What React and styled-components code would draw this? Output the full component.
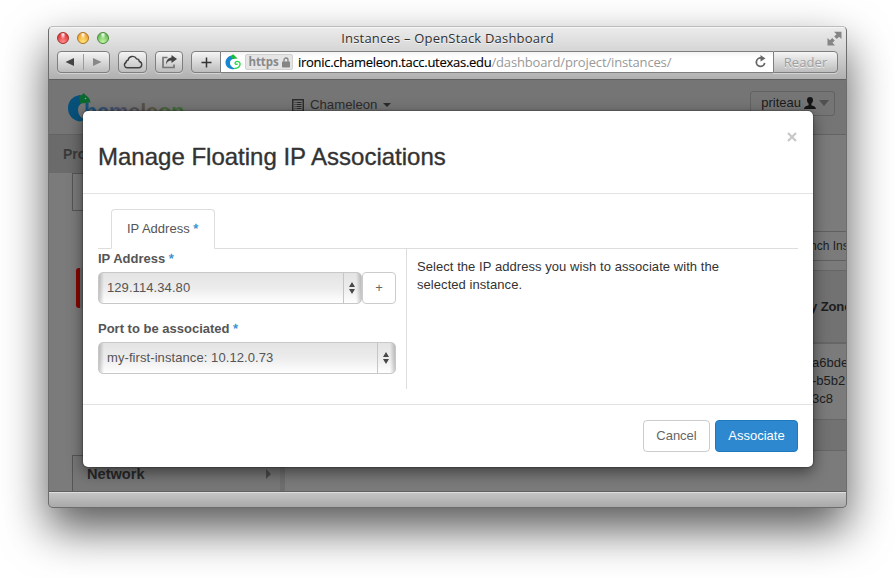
import React from 'react';
import styled, { createGlobalStyle } from 'styled-components';

const Global = createGlobalStyle`
  * { box-sizing: border-box; }
  html, body { margin: 0; background: #fff; overflow: hidden; }
  body { font: 13px/18px "Liberation Sans", Arial, sans-serif; color: #555; }
  button { font: inherit; padding: 0; margin: 0; }
`;

const Desktop = styled.div`
  width: 895px; height: 578px; padding: 26px 48px 0; overflow: hidden; background: #fff;
`;
const Window = styled.main`
  width: 799px; height: 482px; border-radius: 5px; overflow: hidden;
  border: 1px solid #6d6d6d; border-top-color: #bcbcbc;
  display: flex; flex-direction: column; background: #7b7b7b;
  box-shadow: 0 21px 45px rgba(0,0,0,.66);
`;
const Chrome = styled.header`
  height: 53px; flex: none; border-bottom: 1px solid #606060;
  background: linear-gradient(#ececec, #d6d6d6 45%, #b0b0b0);
  box-shadow: inset 0 1px 0 #f6f6f6;
`;
const TitleBar = styled.div`
  height: 24px; display: flex; align-items: center; padding: 0 4px 2px 8px;
`;
const Lights = styled.div`display: flex; gap: 8px; width: 76px;`;
const Light = styled.span`
  width: 12px; height: 12px; border-radius: 50%; border: 1px solid ${p => p.$edge};
  background: radial-gradient(ellipse at 50% 15%, #fff 0, transparent 40%),
    radial-gradient(circle at 50% 90%, ${p => p.$glow}, ${p => p.$tone} 75%);
`;
const WindowTitle = styled.h1`
  flex: 1; margin: 0; text-align: center; font: 13px/20px "Open Sans", "Noto Sans", sans-serif;
  color: #303030; letter-spacing: .2px; text-shadow: 0 1px 0 #f4f4f4;
`;
const TitleEnd = styled.div`width: 80px; display: flex; justify-content: flex-end;`;
const Tools = styled.div`
  display: flex; padding: 0 8px; height: 22px;
`;
const ToolButton = styled.button`
  width: ${p => p.$w}px; height: 22px; margin-right: ${p => p.$gap ?? 8}px;
  border: 1px solid #7f7f7f; border-radius: ${p => p.$r || '4px'};
  background: linear-gradient(#f5f5f5, #bdbdbd); color: #3d3d3d;
  box-shadow: 0 1px 0 rgba(255,255,255,.4);
  display: flex; align-items: center; justify-content: center;
`;
const Split = styled.span`width: 1px; height: 16px; background: #9b9b9b; margin: 0 8px;`;
const Address = styled.div`
  width: 552px; height: 22px; background: linear-gradient(#f3f3f3, #fff 25%);
  border: solid #7f7f7f; border-width: 1px 0; display: flex; align-items: center; padding-left: 4px;
`;
const Secure = styled.span`
  width: 48px; height: 16px; margin: 0 5px 0 4px; border: 1px solid #d0d0d0; border-radius: 2px; background: #e5e5e5;
  display: flex; align-items: center; justify-content: center; gap: 3px;
  font: 700 11.5px/14px "Open Sans", sans-serif; letter-spacing: -.1px; color: #898989;
`;
const Url = styled.span`
  flex: 1; font: 13px/20px "Open Sans", sans-serif; color: #000; white-space: nowrap; letter-spacing: -0.28px;
  -webkit-text-stroke: .15px #000;
`;
const UrlPath = styled.span`color: #999; letter-spacing: -0.15px; -webkit-text-stroke: 0;`;
const Reload = styled.span`width: 13px; height: 14px; margin-right: 6px; display: flex;`;
const Reader = styled(ToolButton)`
  font: 13px/20px "Open Sans", sans-serif; color: #a0a0a0; letter-spacing: .1px; text-shadow: 0 1px 0 #eee;
`;

const Page = styled.div`
  position: relative; flex: 1; overflow: hidden; display: flex; flex-direction: column; background: #7b7b7b;
`;
const PageHeader = styled.div`
  height: 55px; flex: none; background: #757575; border-bottom: 1px solid #636363;
  display: flex; padding: 11px 11px 0 18px;
`;
const Brand = styled.div`display: flex; width: 225px; padding-top: 2px;`;
const Wordmark = styled.span`
  margin: 4px 0 0 -10px; font: 700 22px/30px "Liberation Sans", sans-serif; letter-spacing: -.3px;
  color: transparent; background: linear-gradient(90deg, #12527c, #4b4e68 35%, #5b5146 65%, #3f6c37 90%);
  background-clip: text; -webkit-background-clip: text;
`;
const Project = styled.div`
  display: flex; align-items: center; gap: 6px; height: 28px; flex: 1; color: #2b2b2b; font-size: 13.2px;
`;
const UserMenu = styled.div`
  width: 85px; height: 25px; border: 1px solid #626262; border-radius: 3px; color: #1b1b1b;
  display: flex; align-items: center; justify-content: flex-end; gap: 3px; padding: 0 5px 2px 0; font-size: 13px;
`;
const Workspace = styled.div`display: flex; flex: 1;`;
const Sidebar = styled.nav`width: 236px; flex: none; border-right: 5px solid #6f6f6f; display: flex; flex-direction: column;`;
const Section = styled.div`
  height: 38px; padding: 10px 14px; background: #6b6b6b; color: #3a3a3a; font: 700 14px/18px "Liberation Sans", sans-serif;
`;
const Panel = styled.div`
  margin-left: 23px; height: 38px; border: 1px solid #565656; border-right: 0;
`;
const Active = styled.div`
  margin: 57px 0 147px 27px; height: 40px; border-left: 4px solid #850600; border-radius: 3px; background: #717171;
`;
const Network = styled(Panel)`
  display: flex; justify-content: space-between; align-items: center; padding: 0 8px 0 14px;
  font: 700 14.6px/18px "Liberation Sans", sans-serif; color: #292929; background: #777;
`;
const Content = styled.section`flex: 1; min-width: 0; padding-top: 96px; color: #1d1d1d;`;
const Launch = styled.div`
  height: 30px; border: solid #606060; border-width: 1px 0; padding: 5px 0 0 525px; white-space: nowrap; margin-bottom: 9px;
  font-size: 12px;
`;
const Cell = styled.div`
  height: ${p => p.$h}px; border-top: ${p => p.$line || 1}px solid #666; padding: ${p => p.$top || 0}px 0 0 ${p => p.$left || 527}px;
  font-weight: ${p => (p.$head ? 700 : 400)}; background: ${p => (p.$dark ? '#727272' : '#7b7b7b')}; white-space: nowrap;
  letter-spacing: ${p => (p.$head ? '-.1px' : 0)};
`;

const Layer = styled.div`
  position: absolute; inset: 0; padding: 31px 0 0 34px;
`;
const Modal = styled.div`
  width: 730px; height: 356px; border-radius: 5px; background: #fff;
  box-shadow: 0 5px 15px rgba(0,0,0,.5), 0 0 2px rgba(0,0,0,.7);
  display: flex; flex-direction: column;
`;
const ModalHead = styled.div`
  height: 83px; border-bottom: 1px solid #e2e2e2; padding: 31px 15px 0; display: flex; justify-content: space-between;
`;
const ModalTitle = styled.h2`
  margin: 0; font: 400 24px/30px "Liberation Sans", sans-serif; color: #333; -webkit-text-stroke: .35px #333; letter-spacing: 0;
`;
const Close = styled.button`
  width: 12px; height: 12px; margin-top: -11px; border: 0; background: none; display: flex;
`;
const ModalBody = styled.div`height: 210px; padding: 15px 15px 0;`;
const Tabs = styled.div`height: 40px; border-bottom: 1px solid #ddd; padding-left: 13px;`;
const Tab = styled.div`
  width: 104px; height: 40px; border: 1px solid #ddd; border-bottom-color: #fff; border-radius: 4px 4px 0 0;
  background: #fff; padding: 10px 15px; color: #555; white-space: nowrap;
`;
const Star = styled.span`color: #2b88d0; font-weight: 400; -webkit-text-stroke: .3px #2b88d0;`;
const Columns = styled.div`display: flex;`;
const Form = styled.div`width: 309px; height: 140px; border-right: 1px solid #ddd;`;
const Help = styled.p`margin: 0; padding: 9px 10px; width: 345px; color: #333; letter-spacing: .06px;`;
const Label = styled.div`height: 23px; line-height: 20px; font-weight: 700; color: #555;`;
const Row = styled.div`display: flex; margin-bottom: 15px;`;
const Select = styled.div`
  width: ${p => p.$w}px; height: 32px; border: 1px solid #c8c8c8; border-radius: 5px; overflow: hidden;
  background: linear-gradient(90deg, #0003, transparent 5px, transparent calc(100% - 5px), #0003),
    linear-gradient(#e4e4e4, #ececec 50%, #fff);
  display: flex; align-items: center; padding-left: 8px;
`;
const Value = styled.span`flex: 1; color: #555; letter-spacing: .08px;`;
const Stepper = styled.span`
  width: 18px; height: 30px; border-left: 1px solid #c6c6c6; display: flex; align-items: center; justify-content: center; padding-right: 1px;
`;
const Button = styled.button`
  width: ${p => p.$w}px; height: 32px; border-radius: 4px; border: 1px solid ${p => (p.$primary ? '#2079bd' : '#ccc')};
  background: ${p => (p.$primary ? '#2d88cf' : '#fff')}; color: ${p => (p.$primary ? '#fff' : '#666')};
`;
const ModalFoot = styled.div`
  flex: 1; border-top: 1px solid #e2e2e2; padding: 15px; display: flex; justify-content: flex-end; gap: 5px;
`;
const StatusBar = styled.footer`
  height: 15px; flex: none; background: linear-gradient(#c4c4c4, #a9a9a9); border-top: 1px solid #dedede; box-shadow: 0 -1px 0 #606060; position: relative;
`;

const Triangle = ({ left, color }) => (
  <svg width="10" height="10" viewBox="0 0 10 10">
    <path d={left ? 'M9 1v8L.5 5z' : 'M1 1v8l8.500-4z'} fill={color} />
  </svg>
);
const Cloud = () => (
  <svg width="20" height="14" viewBox="0 0 20 14" fill="none" stroke="#414141" strokeWidth="1.4">
    <path d="M4.300 12.800h11.400a3.200 3.200 0 0 0 .6-6.300 2.600 2.600 0 0 0-2.700-2.600A4.600 4.600 0 0 0 5 5.200a2.200 2.200 0 0 0-2 2.300 2.800 2.800 0 0 0 1.300 5.300z" />
  </svg>
);
const Share = () => (
  <svg width="17" height="14" viewBox="0 0 17 14">
    <path d="M6.500 2.500H2v10h11V9.500" fill="none" stroke="#777" strokeWidth="1.700" />
    <path d="M10.500 0l5.500 4-5.500 4V5.600C7.800 5.600 6 6.800 5 9.500c0-4 2-6.800 5.500-7.100z" fill="#444" />
  </svg>
);
const Plus = () => (
  <svg width="11" height="11" viewBox="0 0 11 11"><path d="M5.500 .5v10M.5 5.500h10" stroke="#333" strokeWidth="1.500" /></svg>
);
const Lock = () => (
  <svg width="8" height="11" viewBox="0 0 8 11">
    <path d="M2 5V3a2 2 0 0 1 4 0v2" fill="none" stroke="#858585" strokeWidth="1.300" />
    <rect y="4.500" width="8" height="6" rx=".7" fill="#858585" />
  </svg>
);
const Favicon = () => (
  <svg width="16" height="16" viewBox="0 0 16 16" fill="none">
    <path d="M7 1.500C3 2 .5 5 .5 8.500c0 4 3.500 6.800 8 6.800l2-1C7.500 13.800 5 12 5 9c0-2.500 1.500-4 4-4.300z" fill="#1687d0" />
    <path d="M5.500 2.500L8 .2l1.500 1.300 3 3-4.500.4z" fill="#1cbd35" />
    <path d="M9.500 14.500c3.500 0 6-2.500 5.500-5.200-.5-2.300-4.300-2.600-4.800-.6-.4 1.600 1.600 2.300 2.300 1" stroke="#27da45" strokeWidth="1.400" />
  </svg>
);
const BrandMark = () => (
  <svg width="27" height="30" viewBox="0 0 27 30">
    <path d="M13 2C4.500 3.500 1 9 1 15c0 7.500 5 12.500 12 13.500l6-2c-5.500-1-8-5-8-10 0-3 1.500-5 4-6.500L15 3z" fill="#075079" />
    <path d="M12 3l3-1L16.500 0 19 2.500c2.500 1.300 4 3.500 4.500 7L19 10l-6 .5z" fill="#0b6831" />
    <circle cx="18.500" cy="5.500" r=".8" fill="#8aa18a" />
  </svg>
);
const ReloadIcon = () => (
  <svg width="13" height="14" viewBox="0 0 13 14">
    <path d="M7 3A4.200 4.200 0 1 0 10.700 8" fill="none" stroke="#666" strokeWidth="1.800" />
    <path d="M6.500 0l5 3.500-5 3z" fill="#666" />
  </svg>
);
const Expand = () => (
  <svg width="15" height="15" viewBox="0 0 15 15" fill="#858585">
    <path d="M7 .8h7.500V8L12 5.800 9.800 8 7.200 5.400 9.500 3.200zM.5 7L3 9.200 5.200 7l2.600 2.600-2.300 2.200L8 14.500H.5z" />
  </svg>
);
const ListIcon = () => (
  <svg width="12" height="13" viewBox="0 0 12 13" stroke="#292929">
    <rect x=".75" y=".75" width="10.500" height="11.500" fill="none" strokeWidth="1.400" />
    <path d="M2.500 3.500h1M4.500 3.500h5M2.500 5.500h1M4.500 5.500h5M2.500 7.500h1M4.500 7.500h5M2.500 9.500h1M4.500 9.500h5" />
  </svg>
);
const Caret = ({ w = 8, h = 4, color = '#2a2a2a' }) => (
  <svg width={w} height={h} viewBox="0 0 8 4" preserveAspectRatio="none"><path d="M0 0h8L4 4z" fill={color} /></svg>
);
const Person = () => (
  <svg width="12" height="12" viewBox="0 0 12 12" fill="#151515">
    <path d="M6 0C4 0 3 1.300 3 3c0 1.800.8 3 1.600 3.700v1.500C3.500 8.800 0 9.300 0 12h12c0-2.700-3.500-3.200-4.600-3.800V6.700C8.200 6 9 4.800 9 3c0-1.700-1-3-3-3z" />
  </svg>
);
const Arrows = () => (
  <svg width="6" height="12" viewBox="0 0 6 12" fill="#484848"><path d="M0 5l3-5 3 5zM0 7h6l-3 5z" /></svg>
);

export default function App() {
  return (
    <Desktop>
      <Global />
      <Window>
        <Chrome>
          <TitleBar>
            <Lights>
              <Light $edge="#a5302c" $tone="#e0343a" $glow="#ff8d8a" />
              <Light $edge="#ad7321" $tone="#f0a22e" $glow="#ffe779" />
              <Light $edge="#4b8a3b" $tone="#66bd55" $glow="#c3f5a5" />
            </Lights>
            <WindowTitle>Instances – OpenStack Dashboard</WindowTitle>
            <TitleEnd><Expand /></TitleEnd>
          </TitleBar>
          <Tools>
            <ToolButton $w={53}><Triangle left color="#444" /><Split /><Triangle color="#888" /></ToolButton>
            <ToolButton $w={29}><Cloud /></ToolButton>
            <ToolButton $w={28}><Share /></ToolButton>
            <ToolButton $w={30} $gap={0} $r="4px 0 0 4px"><Plus /></ToolButton>
            <Address>
              <Favicon />
              <Secure>https<Lock /></Secure>
              <Url>ironic.chameleon.tacc.utexas.edu<UrlPath>/dashboard/project/instances/</UrlPath></Url>
              <Reload><ReloadIcon /></Reload>
            </Address>
            <Reader $w={65} $gap={0} $r="0 4px 4px 0">Reader</Reader>
          </Tools>
        </Chrome>
        <Page>
          <PageHeader>
            <Brand><BrandMark /><Wordmark>hameleon</Wordmark></Brand>
            <Project><ListIcon />Chameleon <Caret /></Project>
            <UserMenu>priteau <Person /><Caret w={10} h={6} color="#505050" /></UserMenu>
          </PageHeader>
          <Workspace>
            <Sidebar>
              <Section>Pro</Section>
              <Panel />
              <Active />
              <Network>Network<svg width="6" height="10"><path d="M0 0l5 5-5 5z" fill="#4b4b4b" /></svg></Network>
            </Sidebar>
            <Content>
              <Launch>nch Ins</Launch>
              <Cell $h={72} $top={27} $left={525} $head $dark>y Zone</Cell>
              <Cell $h={77} $top={10} $line={2}>a6bde<br />-b5b2<br />3c8</Cell>
              <Cell $h={31} $dark />
              <Cell $h={42} />
            </Content>
          </Workspace>
          <Layer>
            <Modal role="dialog">
              <ModalHead>
                <ModalTitle>Manage Floating IP Associations</ModalTitle>
                <Close aria-label="Close">
                  <svg width="12" height="12" viewBox="0 0 12 12"><path d="M2 2l8 8M10 2l-8 8" stroke="#c8c8c8" strokeWidth="2.300" /></svg>
                </Close>
              </ModalHead>
              <ModalBody>
                <Tabs><Tab>IP Address <Star>*</Star></Tab></Tabs>
                <Columns>
                  <Form>
                    <Label>IP Address <Star>*</Star></Label>
                    <Row>
                      <Select $w={264}><Value>129.114.34.80</Value><Stepper><Arrows /></Stepper></Select>
                      <Button $w={34}>+</Button>
                    </Row>
                    <Label>Port to be associated <Star>*</Star></Label>
                    <Row>
                      <Select $w={298}><Value>my-first-instance: 10.12.0.73</Value><Stepper><Arrows /></Stepper></Select>
                    </Row>
                  </Form>
                  <Help>Select the IP address you wish to associate with the selected instance.</Help>
                </Columns>
              </ModalBody>
              <ModalFoot>
                <Button $w={67}>Cancel</Button>
                <Button $w={83} $primary>Associate</Button>
              </ModalFoot>
            </Modal>
          </Layer>
        </Page>
        <StatusBar />
      </Window>
    </Desktop>
  );
}
